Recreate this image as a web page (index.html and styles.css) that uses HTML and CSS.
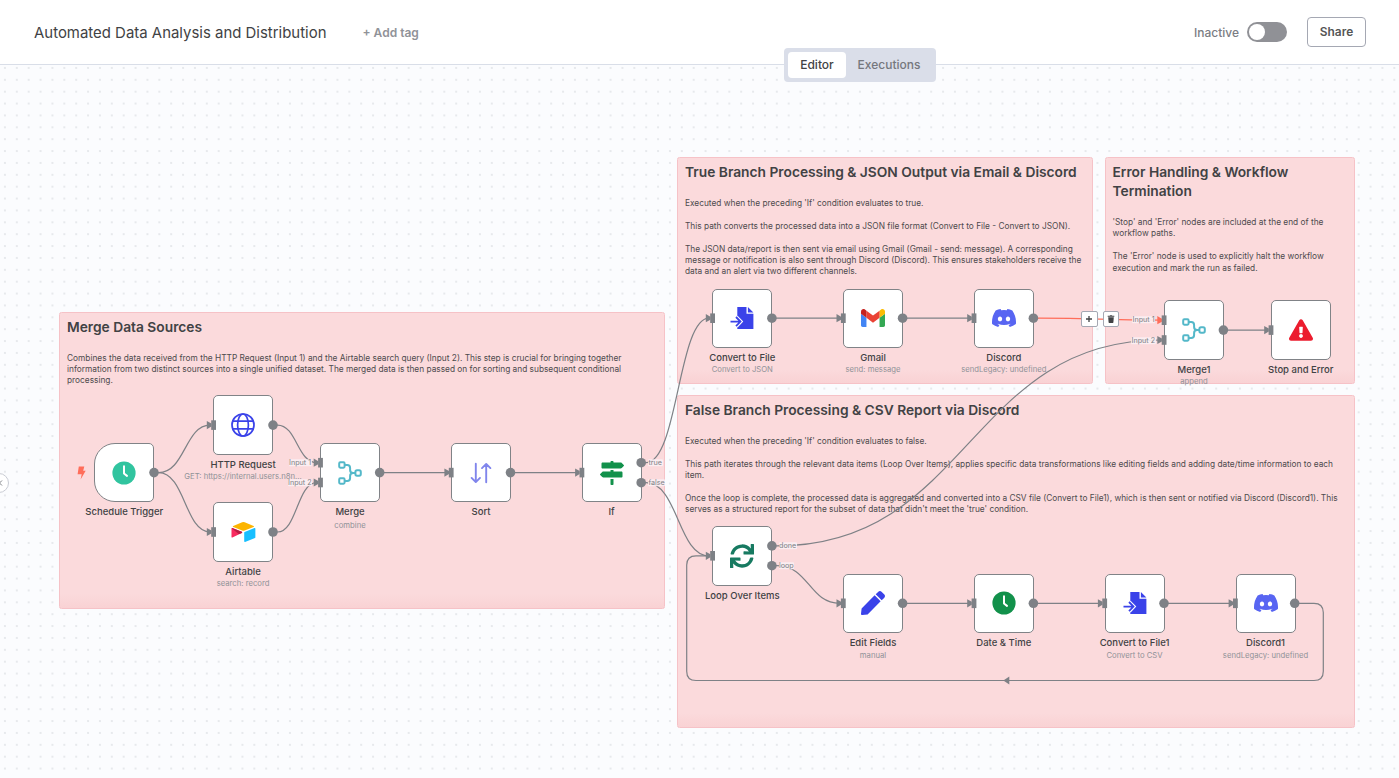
FILE: index.html
```html
<!DOCTYPE html>
<html lang="en">
<head>
<meta charset="utf-8">
<title>Automated Data Analysis and Distribution</title>
<link rel="stylesheet" href="styles.css">
</head>
<body>
<svg class="defs" aria-hidden="true">
  <symbol id="clock" viewBox="0 0 24 24"><circle cx="12" cy="12" r="11.6" fill="currentColor"/><path d="M12 5.2v7.3l3 2.4" fill="none" stroke="#fff" stroke-width="2" stroke-linecap="round" stroke-linejoin="round"/></symbol>
  <symbol id="globe" viewBox="0 0 24 24"><g fill="none" stroke="currentColor" stroke-width="1.7"><circle cx="12" cy="12" r="11"/><ellipse cx="12" cy="12" rx="5.4" ry="11"/><path d="M1.5 8.2h21M1.5 15.8h21"/></g></symbol>
  <symbol id="airtable" viewBox="0 0 200 170"><path fill="#fcb400" d="M90.039 12.368 24.079 39.66c-3.667 1.519-3.63 6.729.062 8.192l66.235 26.266a24.58 24.58 0 0 0 18.12 0l66.236-26.266c3.69-1.463 3.729-6.673.062-8.192l-65.96-27.293a24.58 24.58 0 0 0-18.795 0"/><path fill="#18bfff" d="M105.312 88.46v65.617c0 3.12 3.147 5.258 6.048 4.108l73.806-28.648a4.42 4.42 0 0 0 2.79-4.108V59.813c0-3.121-3.147-5.258-6.048-4.108l-73.806 28.648a4.42 4.42 0 0 0-2.79 4.108"/><path fill="#f82b60" d="M88.078 91.846l-21.904 10.576-2.224 1.075-46.238 22.155c-2.93 1.414-6.672-.722-6.672-3.978V60.088c0-1.178.604-2.195 1.414-2.96a5 5 0 0 1 1.12-.84c1.104-.663 2.68-.84 4.02-.31L87.71 83.76c3.564 1.414 3.844 6.408.368 8.087"/><path fill="#ba1e45" d="m88.078 91.846-21.904 10.576-53.72-45.295a5 5 0 0 1 1.12-.839c1.104-.663 2.68-.84 4.02-.31L87.71 83.76c3.564 1.414 3.844 6.408.368 8.087"/></symbol>
  <symbol id="merge" viewBox="0 0 24 24"><g fill="none" stroke="currentColor" stroke-width="2"><rect x="1.2" y="1.3" width="5.4" height="5.4" rx="1.1"/><rect x="1.2" y="17.3" width="5.4" height="5.4" rx="1.1"/><rect x="17.4" y="9.3" width="5.4" height="5.4" rx="1.6"/><path d="M6.6 4h2.6q2.9 0 2.9 2.9v2q0 3.1 3.1 3.1h2.2M6.6 20h2.6q2.9 0 2.9-2.9v-2q0-3.1 3.1-3.1"/></g></symbol>
  <symbol id="sort" viewBox="0 0 24 24"><path d="M6.8 2.7v18M2.6 16.9l4.2 4.2 4.2-4.2M17.2 21.3v-18M13 7.1l4.2-4.2 4.2 4.2" fill="none" stroke="currentColor" stroke-width="1.9" stroke-linecap="round" stroke-linejoin="round"/></symbol>
  <symbol id="signs" viewBox="0 0 512 512"><path fill="currentColor" d="M507.31 84.69L464 41.37c-6-6-14.14-9.37-22.63-9.37H288V16c0-8.84-7.16-16-16-16h-32c-8.84 0-16 7.16-16 16v16H56c-13.25 0-24 10.75-24 24v80c0 13.25 10.75 24 24 24h385.37c8.49 0 16.62-3.37 22.63-9.37l43.31-43.31c6.25-6.26 6.25-16.38 0-22.63zM224 496c0 8.84 7.16 16 16 16h32c8.84 0 16-7.16 16-16V384h-64v112zm232-272H288v-32h-64v32H70.63c-8.49 0-16.62 3.37-22.63 9.37L4.69 276.69c-6.25 6.25-6.25 16.38 0 22.63L48 342.63c6 6 14.14 9.37 22.63 9.37H456c13.25 0 24-10.75 24-24v-80c0-13.25-10.75-24-24-24z"/></symbol>
  <symbol id="sync" viewBox="0 0 512 512"><path fill="currentColor" d="M440.65 12.57l4 82.77A247.16 247.16 0 0 0 255.83 8C134.73 8 33.91 94.92 12.29 209.82A12 12 0 0 0 24.09 224h49.05a12 12 0 0 0 11.67-9.26 175.91 175.91 0 0 1 317-56.94l-101.46-4.86a12 12 0 0 0-12.57 12v47.41a12 12 0 0 0 12 12H500a12 12 0 0 0 12-12V12a12 12 0 0 0-12-12h-47.37a12 12 0 0 0-11.98 12.57zM255.83 432a175.61 175.61 0 0 1-146-77.8l101.8 4.87a12 12 0 0 0 12.57-12v-47.4a12 12 0 0 0-12-12H12a12 12 0 0 0-12 12V500a12 12 0 0 0 12 12h47.35a12 12 0 0 0 12-12.6l-4.15-82.57A247.17 247.17 0 0 0 255.83 504c121.11 0 221.93-86.92 243.55-201.82a12 12 0 0 0-11.8-14.18h-49.05a12 12 0 0 0-11.67 9.26A175.86 175.86 0 0 1 255.83 432z"/></symbol>
  <symbol id="file" viewBox="0 0 24 24"><path fill="currentColor" d="M7.3 1h9.2v6.7h6.9V23H7.3v-3.1l4-4.3-4-4.4zM17.9 1l5.5 5.5h-5.5z"/><path d="M.8 15.6h9.3M6.2 11.1l4.3 4.5-4.3 4.5" fill="none" stroke="#fff" stroke-width="4"/><path d="M.5 15.6h9.8M6 11l4.5 4.6L6 20.2" fill="none" stroke="currentColor" stroke-width="1.8"/></symbol>
  <symbol id="gmail" viewBox="52 42 88 66"><path fill="#4285f4" d="M58 108h14V74L52 59v43c0 3.32 2.69 6 6 6"/><path fill="#34a853" d="M120 108h14c3.32 0 6-2.69 6-6V59l-20 15"/><path fill="#fbbc04" d="M120 48v26l20-15v-8c0-7.42-8.47-11.65-14.4-7.2"/><path fill="#ea4335" d="M72 74V48l24 18 24-18v26L96 92"/><path fill="#c5221f" d="M52 51v8l20 15V48l-5.6-4.2c-5.94-4.45-14.4-.22-14.4 7.2"/></symbol>
  <symbol id="discord" viewBox="0 0 127.14 96.36"><path fill="currentColor" d="M107.7,8.07A105.15,105.15,0,0,0,81.47,0a72.06,72.06,0,0,0-3.36,6.83A97.68,97.68,0,0,0,49,6.83,72.37,72.37,0,0,0,45.64,0,105.89,105.89,0,0,0,19.39,8.09C2.79,32.65-1.71,56.6.54,80.21h0A105.73,105.73,0,0,0,32.71,96.36,77.7,77.7,0,0,0,39.6,85.25a68.42,68.42,0,0,1-10.85-5.18c.91-.66,1.8-1.34,2.66-2a75.57,75.57,0,0,0,64.32,0c.87.71,1.76,1.39,2.66,2a68.68,68.68,0,0,1-10.87,5.19,77,77,0,0,0,6.89,11.1A105.25,105.25,0,0,0,126.6,80.22h0C129.24,52.84,122.09,29.11,107.7,8.07ZM42.45,65.69C36.18,65.69,31,60,31,53s5-12.74,11.43-12.74S54,46,53.89,53,48.84,65.69,42.45,65.69Zm42.24,0C78.41,65.69,73.25,60,73.25,53s5-12.74,11.44-12.74S96.23,46,96.12,53,91.08,65.69,84.69,65.69Z"/></symbol>
  <symbol id="warning" viewBox="0 0 576 512"><path fill="currentColor" d="M569.517 440.013C587.975 472.007 564.806 512 527.94 512H48.054c-36.937 0-59.999-40.055-41.577-71.987L246.423 23.985c18.467-32.009 64.72-31.951 83.154 0l239.94 416.028zM288 354c-25.405 0-46 20.595-46 46s20.595 46 46 46 46-20.595 46-46-20.595-46-46-46zm-43.673-165.346l7.418 136c.347 6.364 5.609 11.346 11.982 11.346h48.546c6.373 0 11.635-4.982 11.982-11.346l7.418-136c.375-6.874-5.098-12.654-11.982-12.654h-63.383c-6.884 0-12.356 5.78-11.981 12.654z"/></symbol>
  <symbol id="pen" viewBox="0 0 512 512"><path fill="currentColor" d="M290.74 93.24l128.02 128.02-277.99 277.99-114.14 12.6C11.35 513.54-1.56 500.62.14 485.34l12.7-114.22 277.9-277.88zm207.2-19.06l-60.11-60.11c-18.75-18.75-49.16-18.75-67.91 0l-56.55 56.55 128.02 128.02 56.55-56.55c18.75-18.76 18.75-49.16 0-67.91z"/></symbol>
</svg>

<header class="header">
  <h1 class="title">Automated Data Analysis and Distribution</h1>
  <button class="add-tag">+ Add tag</button>
  <div class="actions">
    <span class="state">Inactive</span>
    <span class="switch"></span>
    <button class="share">Share</button>
  </div>
  <nav class="tabs"><span class="tab tab-active">Editor</span><span class="tab">Executions</span></nav>
</header>

<main class="canvas">
  <section class="sticky s-merge">
    <h2>Merge Data Sources</h2>
    <p>Combines the data received from the HTTP Request (Input 1) and the Airtable search query (Input 2). This step is crucial for bringing together<br>information from two distinct sources into a single unified dataset. The merged data is then passed on for sorting and subsequent conditional<br>processing.</p>
  </section>
  <section class="sticky s-true">
    <h2>True Branch Processing &amp; JSON Output via Email &amp; Discord</h2>
    <p>Executed when the preceding 'If' condition evaluates to true.</p>
    <p>This path converts the processed data into a JSON file format (Convert to File - Convert to JSON).</p>
    <p>The JSON data/report is then sent via email using Gmail (Gmail - send: message). A corresponding<br>message or notification is also sent through Discord (Discord). This ensures stakeholders receive the<br>data and an alert via two different channels.</p>
  </section>
  <section class="sticky s-error">
    <h2>Error Handling &amp; Workflow<br>Termination</h2>
    <p>'Stop' and 'Error' nodes are included at the end of the<br>workflow paths.</p>
    <p>The 'Error' node is used to explicitly halt the workflow<br>execution and mark the run as failed.</p>
  </section>
  <section class="sticky s-false">
    <h2>False Branch Processing &amp; CSV Report via Discord</h2>
    <p>Executed when the preceding 'If' condition evaluates to false.</p>
    <p>This path iterates through the relevant data items (Loop Over Items), applies specific data transformations like editing fields and adding date/time information to each<br>item.</p>
    <p>Once the loop is complete, the processed data is aggregated and converted into a CSV file (Convert to File1), which is then sent or notified via Discord (Discord1). This<br>serves as a structured report for the subset of data that didn't meet the 'true' condition.</p>
  </section>

  <svg class="edges" viewBox="0 0 1399 778">
    <g fill="none" stroke="#7e8186" stroke-width="1.2">
      <path d="M154 472.6H158.6C185 472.6 185 425.1 210 425.1"/>
      <path d="M154 472.6H158.6C185 472.6 185 532 210 532"/>
      <path d="M273 425.1H277.5C297 425.1 297 462.7 317 462.7"/>
      <path d="M273 532H277.5C297 532 297 482.5 317 482.5"/>
      <path d="M380 472.6H448M511 472.6H579"/>
      <path d="M641 462.7H646C678 462.7 678 318.2 709 318.2"/>
      <path d="M641 482.7H646C678 482.7 678 555.8 709 555.8"/>
      <path d="M772 318.2H841M903 318.2H971M1224 330.1H1268"/>
      <path d="M772 545.9H777C969 545.9 969 340 1161 340"/>
      <path d="M772 565.7H777C809 565.7 809 603.3 840 603.3"/>
      <path d="M903 603.3H971M1034 603.3H1102M1164 603.3H1233"/>
      <path d="M1295 603.3H1314Q1323.3 603.3 1323.3 612.6V671.2Q1323.3 680.5 1314 680.5H696Q686.7 680.5 686.7 671.2V565.1Q686.7 555.8 696 555.8H709"/>
      <path stroke="#ff6d5a" d="M1034 318.2H1039C1100 318.2 1100 320.2 1161 320.2"/>
    </g>
    <path fill="#7e8186" d="M1003.3 680.5l6-4v8z"/>
  </svg>

  <span class="elabel l-in1">Input 1</span>
  <span class="elabel l-in2">Input 2</span>
  <span class="elabel l-true">true</span>
  <span class="elabel l-false">false</span>
  <span class="elabel l-done">done</span>
  <span class="elabel l-loop">loop</span>
  <span class="elabel l-in3">Input 1</span>
  <span class="elabel l-in4">Input 2</span>

  <svg class="bolt" viewBox="0 0 9 14"><path fill="#ff6d5a" d="M1.8.5h5.5L6.2 4.8h2.5L3.6 13.5l1.1-5.3H.6z"/></svg>

  <article class="node n-schedule"><div class="box trigger"><svg class="icon c-mint"><use href="#clock"/></svg></div><b>Schedule Trigger</b></article>
  <article class="node n-http"><div class="box"><svg class="icon c-blue"><use href="#globe"/></svg></div><b>HTTP Request</b><small>GET: https://internal.users.n8n...</small></article>
  <article class="node n-airtable"><div class="box"><svg class="icon wide"><use href="#airtable"/></svg></div><b>Airtable</b><small>search: record</small></article>
  <article class="node n-merge"><div class="box"><svg class="icon c-teal"><use href="#merge"/></svg></div><b>Merge</b><small class="low">combine</small></article>
  <article class="node n-sort"><div class="box"><svg class="icon c-violet"><use href="#sort"/></svg></div><b>Sort</b></article>
  <article class="node n-if"><div class="box"><svg class="icon c-green"><use href="#signs"/></svg></div><b>If</b></article>
  <article class="node n-file"><div class="box"><svg class="icon c-blue"><use href="#file"/></svg></div><b>Convert to File</b><small>Convert to JSON</small></article>
  <article class="node n-gmail"><div class="box"><svg class="icon"><use href="#gmail"/></svg></div><b>Gmail</b><small>send: message</small></article>
  <article class="node n-discord"><div class="box"><svg class="icon c-discord"><use href="#discord"/></svg></div><b>Discord</b><small>sendLegacy: undefined</small></article>
  <article class="node n-merge1"><div class="box"><svg class="icon c-teal"><use href="#merge"/></svg></div><b>Merge1</b><small>append</small></article>
  <article class="node n-stop"><div class="box"><svg class="icon c-red"><use href="#warning"/></svg></div><b>Stop and Error</b></article>
  <article class="node n-loop"><div class="box"><svg class="icon c-pine"><use href="#sync"/></svg></div><b>Loop Over Items</b></article>
  <article class="node n-edit"><div class="box"><svg class="icon c-blue"><use href="#pen"/></svg></div><b>Edit Fields</b><small class="low">manual</small></article>
  <article class="node n-date"><div class="box"><svg class="icon c-green"><use href="#clock"/></svg></div><b>Date &amp; Time</b></article>
  <article class="node n-file1"><div class="box"><svg class="icon c-blue"><use href="#file"/></svg></div><b>Convert to File1</b><small class="low">Convert to CSV</small></article>
  <article class="node n-discord1"><div class="box"><svg class="icon c-discord"><use href="#discord"/></svg></div><b>Discord1</b><small class="low">sendLegacy: undefined</small></article>

  <svg class="edges" viewBox="0 0 1399 778">
    <defs>
      <g id="in"><path d="M-6.8-4.1v8.2l4.6-2.6v-3z"/><rect x="-2.4" y="-4.8" width="4.8" height="9.6"/></g>
      <circle id="out" r="4.8"/>
    </defs>
    <g fill="#7e8186">
      <use href="#in" x="213.6" y="425.1"/><use href="#in" x="213.6" y="532"/>
      <use href="#in" x="320.5" y="462.7"/><use href="#in" x="320.5" y="482.5"/>
      <use href="#in" x="451.2" y="472.6"/><use href="#in" x="581.9" y="472.6"/>
      <use href="#in" x="712.6" y="318.2"/><use href="#in" x="843.3" y="318.2"/><use href="#in" x="974" y="318.2"/>
      <use href="#in" x="1164.1" y="340"/><use href="#in" x="1271" y="330.1"/>
      <use href="#in" x="712.6" y="555.8"/><use href="#in" x="843.3" y="603.3"/><use href="#in" x="974" y="603.3"/>
      <use href="#in" x="1104.7" y="603.3"/><use href="#in" x="1235.4" y="603.3"/>
      <path fill="#ff6d5a" d="M1157.3 316.1v8.2l4.6-2.6v-3z"/><rect x="1161.7" y="315.4" width="4.8" height="9.6"/>
      <use href="#out" x="154" y="472.6"/><use href="#out" x="273" y="425.1"/><use href="#out" x="273" y="532"/>
      <use href="#out" x="379.7" y="472.6"/><use href="#out" x="510.5" y="472.6"/>
      <use href="#out" x="641.2" y="462.7"/><use href="#out" x="641.2" y="482.7"/>
      <use href="#out" x="771.9" y="318.2"/><use href="#out" x="902.6" y="318.2"/><use href="#out" x="1033.4" y="318.2"/>
      <use href="#out" x="1223.4" y="330.1"/><use href="#out" x="771.9" y="545.9"/><use href="#out" x="771.9" y="565.7"/>
      <use href="#out" x="902.6" y="603.3"/><use href="#out" x="1033.4" y="603.3"/><use href="#out" x="1164" y="603.3"/><use href="#out" x="1294.7" y="603.3"/>
    </g>
  </svg>

  <div class="toolbar">
    <button class="tool"><svg viewBox="0 0 8 8"><path d="M4 1v6M1 4h6" stroke="#414244" stroke-width="1.3"/></svg></button>
    <button class="tool"><svg viewBox="0 0 8 8"><path d="M.7.8h2L3.1.2h1.8l.4.6h2v1H.7zM1.2 2.3h5.6l-.4 5q0 .6-.6.6H2.2q-.6 0-.6-.6z" fill="#414244"/></svg></button>
  </div>
  <button class="expand"><svg viewBox="0 0 8 8"><path d="M5 1.5L2.5 4 5 6.5" fill="none" stroke="#7e8186"/></svg></button>
</main>
</body>
</html>
```
FILE: styles.css
```css
* { box-sizing: border-box; }
body { margin: 0; width: 1399px; height: 778px; overflow: hidden; position: relative; background: #fbfcfe; font-family: Inter, "Liberation Sans", sans-serif; color: #414244; }
button { font: inherit; margin: 0; padding: 0; }
.defs { position: absolute; width: 0; height: 0; }

.header { position: relative; z-index: 2; display: flex; align-items: center; height: 65px; padding: 0 33px 0 34px; background: #fff; border-bottom: 1px solid #d9dee8; }
.title { margin: 0; padding-top: 2px; font-size: 14.95px; font-weight: 400; line-height: 20px; white-space: nowrap; }
.add-tag { margin-left: 36px; padding-top: 1px; border: 0; background: none; color: #909298; font-size: 12px; font-weight: 600; white-space: nowrap; }
.actions { display: flex; align-items: center; margin-left: auto; }
.state { padding-top: 1px; font-size: 12px; font-weight: 500; color: #7b7d83; margin-right: 8px; }
.switch { width: 40px; height: 20px; border-radius: 10px; background: #909196; padding: 2px; margin-right: 20px; }
.switch::before { content: ""; display: block; width: 16px; height: 16px; border-radius: 50%; background: #fff; }
.share { width: 59px; height: 30px; padding-bottom: 1px; border: 1px solid #a5a8b3; border-radius: 4px; background: #fff; color: #555; font-size: 11.9px; font-weight: 600; }
.tabs { position: absolute; left: 784px; top: 48px; display: flex; width: 152px; height: 34px; padding: 4px; border-radius: 4px; background: #dadee9; }
.tab { display: flex; align-items: center; justify-content: center; width: 86px; padding-bottom: 2px; font-size: 12px; font-weight: 500; color: #75777d; border-radius: 4px; }
.tab-active { width: 58px; background: #fff; color: #414244; }

/* Workflow canvas: items are placed freely in canvas coordinates. */
.canvas { position: absolute; inset: 0; overflow: hidden; background-image: radial-gradient(circle at 50% 50%, #d3d6db 0.5px, transparent 0.9px); background-size: 11.88px 11.88px; background-position: -1px 62px; }
.edges { position: absolute; inset: 0; width: 1399px; height: 778px; }

.sticky { position: absolute; padding: 5px 7px; border: 1px solid #f6c2c7; border-radius: 2.4px; background: linear-gradient(#fbdadc calc(100% - 14px), #f9d2d4); white-space: nowrap; }
.sticky h2 { margin: 0 0 15.7px; font-size: 13.78px; line-height: 19px; font-weight: 600; }
.sticky p { margin: 0 0 11.8px; font-size: 8.32px; line-height: 11.2px; color: #4d4a4d; }
.s-merge { left: 59px; top: 312px; width: 606px; height: 297px; }
.s-true { left: 677px; top: 157px; width: 416px; height: 227px; }
.s-error { left: 1104.5px; top: 157px; width: 250px; height: 227px; }
.s-error h2 { margin-bottom: 16.2px; }
.s-false { left: 677px; top: 395px; width: 677.5px; height: 333px; }

.node { position: absolute; display: flex; flex-direction: column; align-items: center; width: 60px; white-space: nowrap; }
.box { display: flex; align-items: center; justify-content: center; width: 60px; height: 59.4px; flex: none; background: #fff; border: 1.2px solid #808387; border-radius: 5px; }
.trigger { border-radius: 21px 5px 5px 21px; }
.icon { width: 24px; height: 24px; display: block; }
.wide { width: 27px; }
.node b { margin-top: 2.9px; font-size: 9.5px; line-height: 13px; font-weight: 500; }
.node small { margin-top: .6px; font-size: 7.7px; line-height: 12px; color: #909298; }
.node .low { margin-top: 1.3px; }
.n-schedule { left: 94.3px; top: 443px; }
.n-http { left: 213px; top: 395.4px; }
.n-airtable { left: 213px; top: 502.3px; }
.n-merge { left: 320px; top: 443px; }
.n-sort { left: 451px; top: 443px; }
.n-if { left: 581.5px; top: 443px; }
.n-file { left: 712.3px; top: 288.5px; }
.n-gmail { left: 843px; top: 288.5px; }
.n-discord { left: 973.8px; top: 288.5px; }
.n-merge1 { left: 1164px; top: 300.4px; }
.n-stop { left: 1270.8px; top: 300.4px; }
.n-loop { left: 712.3px; top: 526.3px; }
.n-edit { left: 843px; top: 573.5px; }
.n-date { left: 973.8px; top: 573.5px; }
.n-file1 { left: 1104.5px; top: 573.5px; }
.n-discord1 { left: 1235.5px; top: 573.5px; }
.c-mint { color: #31c49f; }
.c-blue { color: #3a42e9; }
.c-teal { color: #54b8c9; }
.c-violet { color: #8085ec; }
.c-green { color: #12914b; }
.c-discord { color: #5865f2; }
.c-red { color: #ec1c2e; }
.c-pine { color: #177a61; }

.elabel { position: absolute; transform: translateY(-50%); padding: 0 .5px; border-radius: 1px; background: rgba(251, 240, 243, .9); font-size: 7.2px; line-height: 7.5px; color: #7e8186; white-space: nowrap; }
.l-in1 { left: 288.5px; top: 462.5px; }
.l-in2 { left: 287.5px; top: 482.5px; }
.l-true { left: 648px; top: 462.5px; }
.l-false { left: 648px; top: 482.5px; }
.l-done { left: 778.5px; top: 545.5px; }
.l-loop { left: 778.5px; top: 565.5px; }
.l-in3 { left: 1132px; top: 319.5px; }
.l-in4 { left: 1131px; top: 340.5px; }

.bolt { position: absolute; left: 76.5px; top: 465.5px; width: 9px; height: 14px; }
.toolbar { position: absolute; left: 1081px; top: 311px; display: flex; gap: 5px; }
.tool { display: flex; align-items: center; justify-content: center; width: 16.5px; height: 16px; border: 1px solid #a5a8b3; border-radius: 2px; background: #fff; }
.tool svg { width: 8px; height: 8px; }
.expand { position: absolute; left: -11px; top: 473px; width: 20px; height: 20px; display: flex; align-items: center; justify-content: flex-end; padding-right: 3px; border: 1px solid #c9ccd4; border-radius: 50%; background: #fff; }
.expand svg { width: 8px; height: 8px; }
```
